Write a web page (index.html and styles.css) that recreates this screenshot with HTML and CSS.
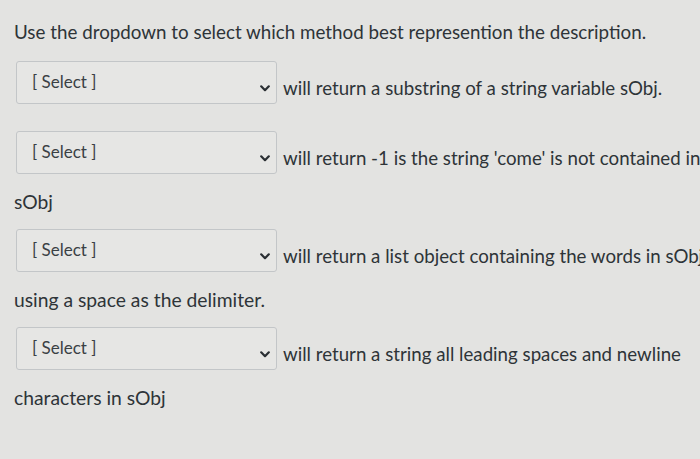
FILE: index.html
```html
<!DOCTYPE html>
<html>
<head>
<meta charset="utf-8">
<link rel="stylesheet" href="styles.css">
</head>
<body>
<div class="page">
  <p class="title">Use the dropdown to select which method best represention the description.</p>

  <div class="q">
    <div class="row">
      <div class="select"><span class="ph">[ Select ]</span><svg class="chev" width="10" height="7" viewBox="0 0 10 7"><path d="M1.2 1.3 L5 5.2 L8.8 1.3" fill="none" stroke="#2a2f33" stroke-width="2.2" stroke-linecap="round" stroke-linejoin="round"/></svg></div>
      <span class="txt">will return a substring of a string variable sObj.</span>
    </div>
  </div>

  <div class="q wrap">
    <div class="row">
      <div class="select"><span class="ph">[ Select ]</span><svg class="chev" width="10" height="7" viewBox="0 0 10 7"><path d="M1.2 1.3 L5 5.2 L8.8 1.3" fill="none" stroke="#2a2f33" stroke-width="2.2" stroke-linecap="round" stroke-linejoin="round"/></svg></div>
      <span class="txt">will return -1 is the string 'come' is not contained in</span>
    </div>
    <p class="cont">sObj</p>
  </div>

  <div class="q wrap">
    <div class="row">
      <div class="select"><span class="ph">[ Select ]</span><svg class="chev" width="10" height="7" viewBox="0 0 10 7"><path d="M1.2 1.3 L5 5.2 L8.8 1.3" fill="none" stroke="#2a2f33" stroke-width="2.2" stroke-linecap="round" stroke-linejoin="round"/></svg></div>
      <span class="txt">will return a list object containing the words in sObj</span>
    </div>
    <p class="cont">using a space as the delimiter.</p>
  </div>

  <div class="q wrap">
    <div class="row">
      <div class="select"><span class="ph">[ Select ]</span><svg class="chev" width="10" height="7" viewBox="0 0 10 7"><path d="M1.2 1.3 L5 5.2 L8.8 1.3" fill="none" stroke="#2a2f33" stroke-width="2.2" stroke-linecap="round" stroke-linejoin="round"/></svg></div>
      <span class="txt">will return a string all leading spaces and newline</span>
    </div>
    <p class="cont">characters in sObj</p>
  </div>
</div>
</body>
</html>
```

FILE: styles.css
```css
html, body {
  margin: 0;
  padding: 0;
  overflow: hidden;
  background: #e3e3e1;
}
body {
  font-family: Lato, "Liberation Sans", sans-serif;
  color: #2e3438;
  width: 700px;
  height: 459px;
}
.page {
  padding: 20px 0 0 14px;
}
.title {
  margin: 0 0 17px 0;
  font-size: 18.8px;
  line-height: 24px;
  white-space: nowrap;
}
.q {
  margin-bottom: 27px;
}
.q.wrap {
  margin-bottom: 13px;
}
.row {
  display: flex;
  align-items: flex-start;
  gap: 6px;
  white-space: nowrap;
  margin-left: 2px;
}
.select {
  box-sizing: border-box;
  width: 261px;
  height: 43px;
  flex: none;
  border: 1px solid #c3c6c8;
  border-radius: 3px;
  background: #e6e6e4;
  display: flex;
  align-items: flex-start;
  justify-content: space-between;
  padding: 9px 6px 0 15px;
}
.ph {
  font-size: 17px;
  line-height: 22px;
  color: #3a4044;
}
.chev {
  margin-top: 14px;
}
.txt {
  font-size: 18.7px;
  line-height: 24px;
  margin-top: 15px;
}
.cont {
  margin: 14px 0 0 0;
  font-size: 19.3px;
  line-height: 28px;
  white-space: nowrap;
}
```
